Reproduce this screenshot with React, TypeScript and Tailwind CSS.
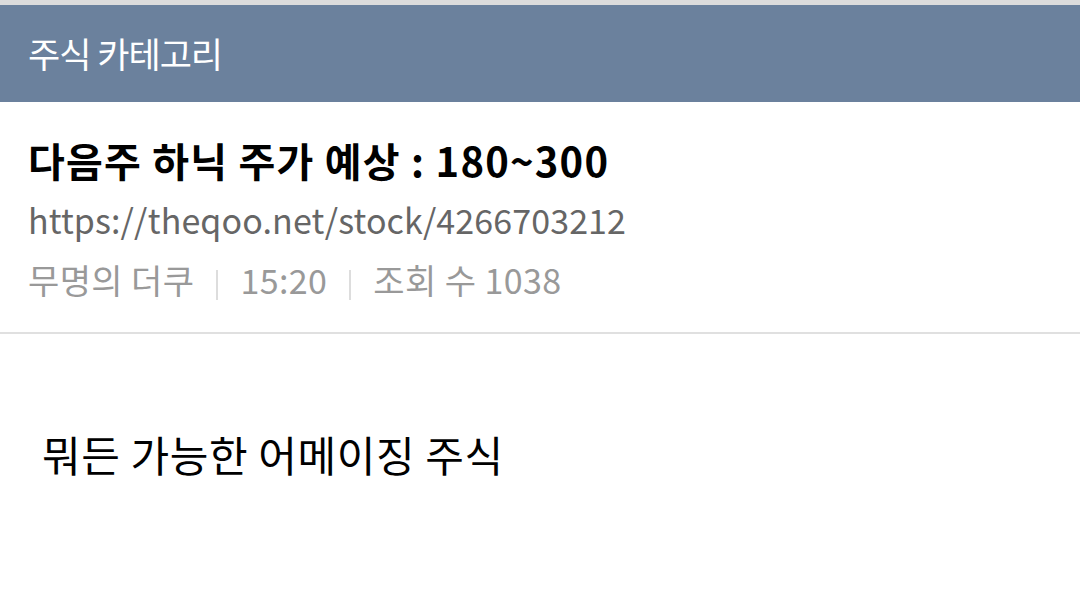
export default function App() {
  const meta = ['무명의 더쿠', '15:20', '조회 수 1038'];

  return (
    <div
      className="w-[1080px] h-[602px] bg-white overflow-hidden"
      style={{ fontFamily: '"Noto Sans CJK KR", "Noto Sans", sans-serif' }}
    >
      {/* top strip + category bar */}
      <div className="h-[5px] bg-[#dcdcdc]" />
      <div className="h-[97px] bg-[#6b819d] flex items-center px-[28px] pb-[2px]">
        <h1 className="text-white text-[35px] tracking-[-1px] leading-none">주식 카테고리</h1>
      </div>

      {/* post header */}
      <div className="px-[28px] pt-[33px] pb-[30px] border-b-2 border-[#e0e0e0]">
        <h2 className="text-[40px] font-bold text-black leading-[50px] tracking-[1.2px]">
          다음주 하닉 주가 예상 : 180~300
        </h2>
        <p className="mt-[13px] text-[34px] text-[#666] leading-[44px] tracking-[0.1px]">
          https://theqoo.net/stock/4266703212
        </p>
        <div className="mt-[16px] flex items-center text-[34px] text-[#999] leading-[44px] tracking-[0.4px]">
          {meta.map((m, i) => (
            <div key={m} className="flex items-center">
              {i > 0 && <span className="mx-[22px] mt-[10px] w-[2px] h-[30px] bg-[#dddddd]" />}
              <span>{m}</span>
            </div>
          ))}
        </div>
      </div>

      {/* post body */}
      <div className="px-[42px] pt-[94px]">
        <p className="text-[42px] text-black leading-[52px] tracking-[0.6px]">뭐든 가능한 어메이징 주식</p>
      </div>
    </div>
  );
}
